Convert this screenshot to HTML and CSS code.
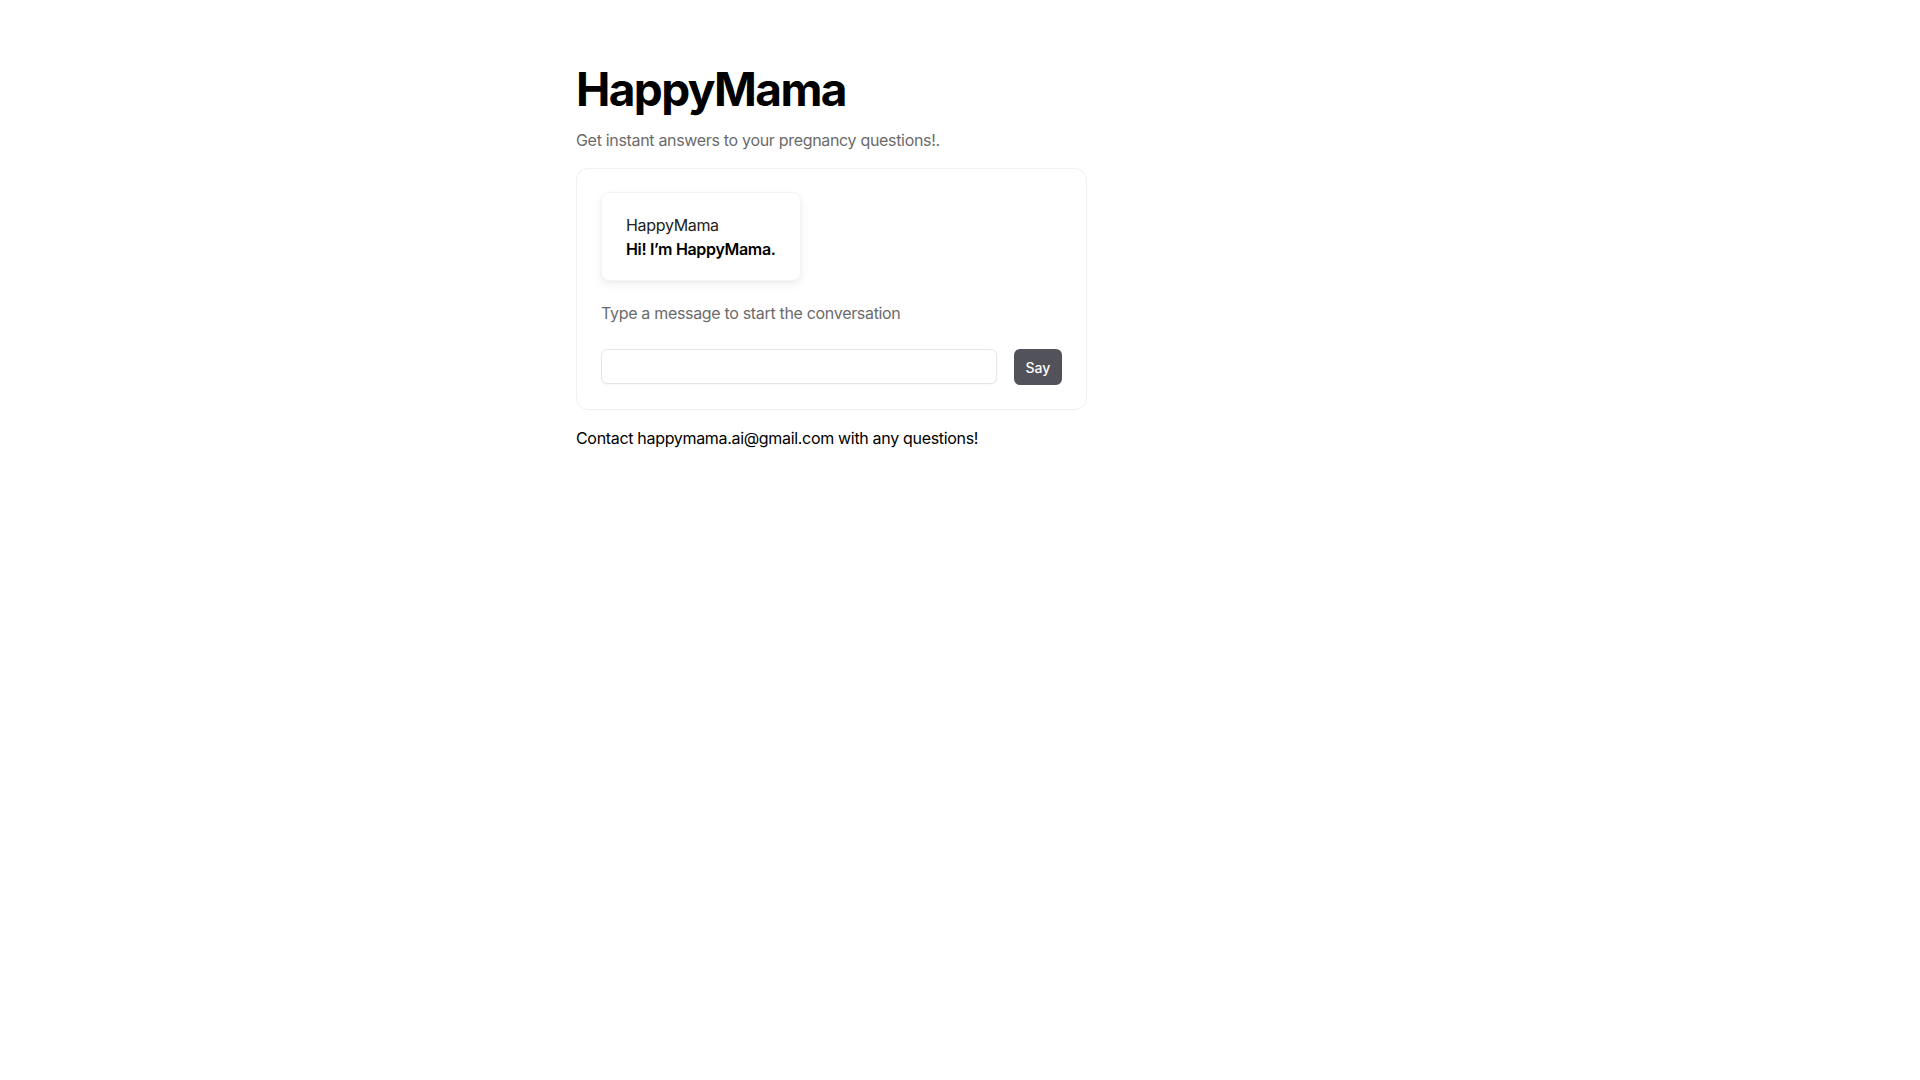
FILE: index.html
```html
<!DOCTYPE html>
<html lang="en">
<head>
<meta charset="utf-8">
<title>HappyMama</title>
<link rel="stylesheet" href="styles.css">
</head>
<body>
<main class="page">
  <h1 class="title">HappyMama</h1>
  <p class="subtitle">Get instant answers to your pregnancy questions!.</p>
  <section class="card">
    <div class="bubble">
      <div class="bubble-name">HappyMama</div>
      <div class="bubble-text">Hi! I’m HappyMama.</div>
    </div>
    <p class="hint">Type a message to start the conversation</p>
    <form class="composer" onsubmit="return false">
      <input class="composer-input" type="text" aria-label="Message">
      <button class="composer-btn" type="submit">Say</button>
    </form>
  </section>
  <p class="contact">Contact happymama.ai@gmail.com with any questions!</p>
</main>
</body>
</html>
```

FILE: styles.css
```css
* { box-sizing: border-box; }
html, body { margin: 0; padding: 0; background: #fff; }
body {
  font-family: Inter, "Noto Sans", "Liberation Sans", sans-serif;
  color: #111;
}
.page {
  width: 768px;
  margin: 0 auto;
  padding-top: 65px;
}
.title {
  margin: 0;
  font-size: 46px;
  line-height: 48px;
  font-weight: 700;
  letter-spacing: -1.6px;
  color: #000;
}
.subtitle {
  margin: 15px 0 0;
  font-size: 16px;
  line-height: 24px;
  letter-spacing: -0.32px;
  color: #6b6b6b;
}
.card {
  width: 511px;
  margin-top: 16px;
  padding: 23px 24px 24px;
  border: 1px solid #f0f0f0;
  border-radius: 12px;
}
.bubble {
  display: inline-block;
  padding: 20px 24px 19px;
  border: 1px solid #f4f4f4;
  border-radius: 8px;
  box-shadow: 0 4px 10px rgba(0,0,0,0.06), 0 1px 3px rgba(0,0,0,0.04);
  font-size: 16px;
  line-height: 24px;
  letter-spacing: -0.32px;
}
.bubble-name { color: #222; }
.bubble-text { font-weight: 600; color: #000; }
.hint {
  margin: 20px 0 0;
  font-size: 16px;
  line-height: 24px;
  letter-spacing: -0.32px;
  color: #6b6b6b;
}
.composer {
  display: flex;
  align-items: flex-start;
  gap: 17px;
  margin-top: 24px;
}
.composer-input {
  flex: 1;
  height: 35px;
  border: 1px solid #e6e6e6;
  border-radius: 6px;
  box-shadow: 0 1px 2px rgba(0,0,0,0.04);
  font: inherit;
  padding: 0 10px;
  outline: none;
}
.composer-btn {
  width: 48px;
  height: 36px;
  border: none;
  border-radius: 6px;
  background: #52525b;
  color: #fff;
  font-family: inherit;
  font-size: 14px;
  font-weight: 500;
  cursor: pointer;
}
.contact {
  margin: 16px 0 0;
  font-size: 16px;
  line-height: 24px;
  letter-spacing: -0.32px;
  color: #000;
}
```
